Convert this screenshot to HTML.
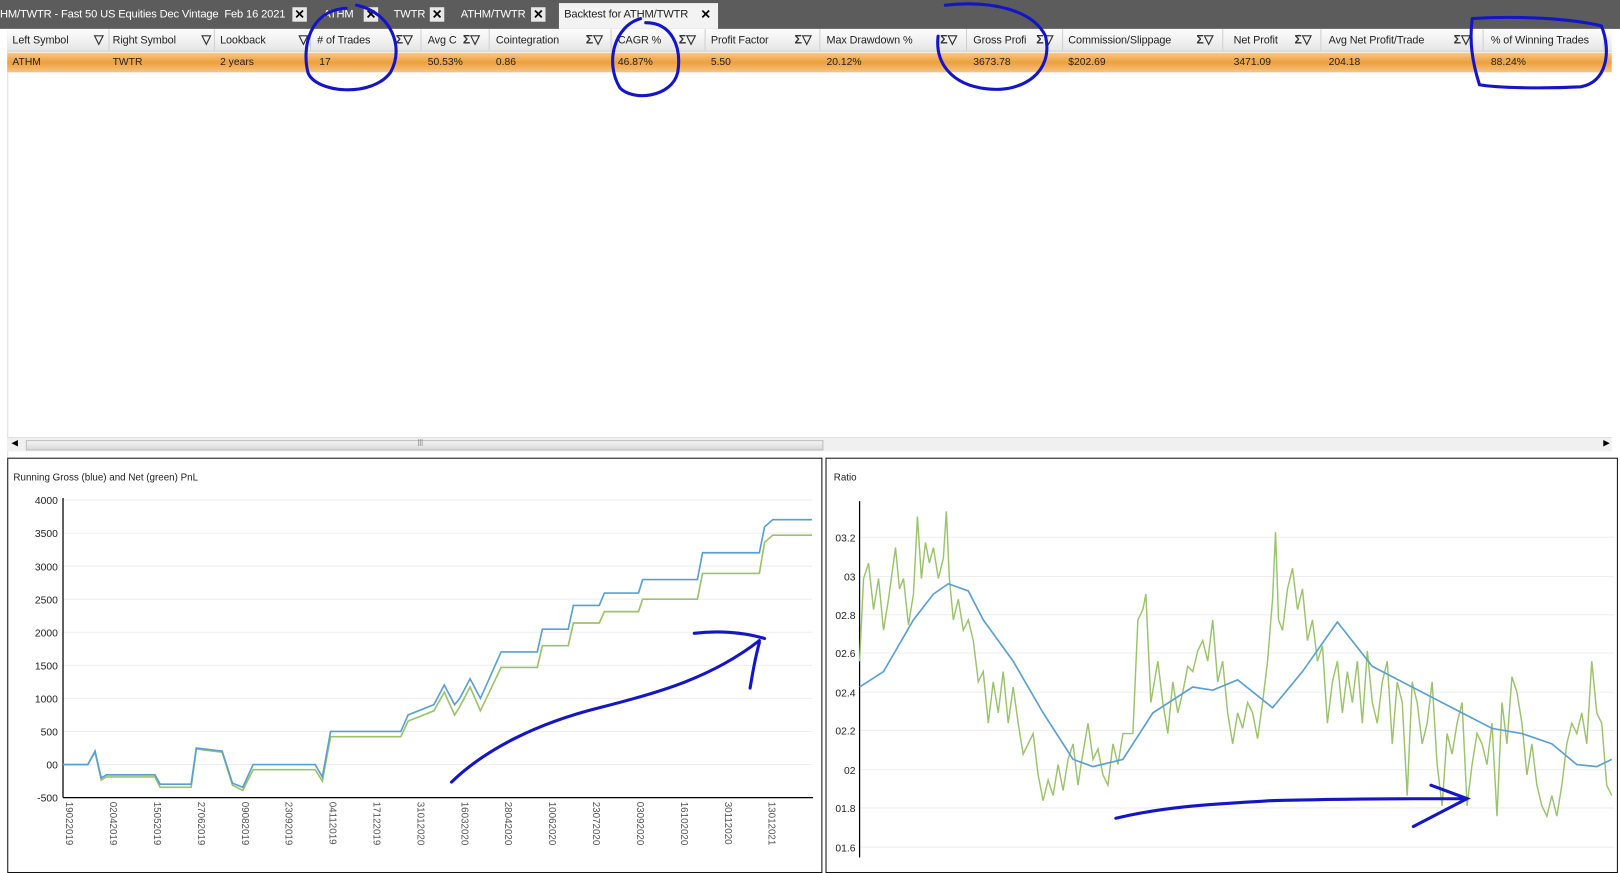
<!DOCTYPE html>
<html><head><meta charset="utf-8"><style>
html,body{margin:0;padding:0;width:1620px;height:859px;overflow:hidden;background:#fff;font-family:"Liberation Sans",Arial,sans-serif;}
#w{position:absolute;left:0;top:0;width:1568px;height:832px;transform:scale(1.03316);transform-origin:0 0;}
.tabbar{position:absolute;left:0;top:0;width:1568px;height:28px;background:#5c5c5c;}
.t{position:absolute;top:8px;font-size:10.8px;color:#fff;white-space:nowrap;letter-spacing:-0.15px;}
.x{position:absolute;top:7px;width:14px;height:14px;background:#e8e8e8;color:#000;font-size:12px;font-weight:bold;line-height:14px;text-align:center;}
.active{position:absolute;left:541px;top:3px;width:154px;height:25px;background:#f3f3f3;}
.hdr{position:absolute;left:7px;top:28px;width:1553px;height:21px;background:linear-gradient(#fdfdfd,#e6e6e6);border-bottom:1px solid #c8c8c8;}
.h{position:absolute;top:5px;font-size:10.5px;color:#222;white-space:nowrap;letter-spacing:-0.1px;}
.sep{position:absolute;top:0;width:1px;height:21px;background:#d0d0d0;}
.ic{position:absolute;top:3px;font-size:12px;color:#333;font-weight:bold;}
.row{position:absolute;left:7px;top:51px;width:1553px;height:19px;background:linear-gradient(#f6c98a,#ee9f3c 50%,#f5c585);}
.d{position:absolute;top:4px;font-size:10px;color:#222;}
.leftedge{position:absolute;left:0;top:28px;width:7px;height:804px;background:#fff;border-right:1px solid #ddd;}
.sb{position:absolute;left:7px;top:423px;width:1553px;height:13px;background:#f0f0f0;border-top:1px solid #e0e0e0;}
.thumb{position:absolute;left:18px;top:2px;width:770px;height:8px;background:linear-gradient(#f4f4f4,#d8d8d8);border:1px solid #bdbdbd;}
.panel{position:absolute;top:443px;height:400px;border:1px solid #111;background:#fff;}
</style></head><body><div id="w">
<div class="tabbar">
<span class="t" style="left:0">HM/TWTR - Fast 50 US Equities Dec Vintage&nbsp; Feb 16 2021</span><span class="x" style="left:283px">✕</span>
<span class="t" style="left:313px">ATHM</span><span class="x" style="left:352px">✕</span>
<span class="t" style="left:381px">TWTR</span><span class="x" style="left:416px">✕</span>
<span class="t" style="left:446px">ATHM/TWTR</span><span class="x" style="left:514px">✕</span>
<div class="active"></div><span class="t" style="left:546px;color:#222">Backtest for ATHM/TWTR</span><span class="x" style="left:676px;background:#f3f3f3">✕</span>
</div>
<div class="leftedge"></div>
<div class="hdr">
<span class="h" style="left:5px">Left Symbol</span><span class="ic" style="left:84px">▽</span><div class="sep" style="left:98px"></div>
<span class="h" style="left:102px">Right Symbol</span><span class="ic" style="left:188px">▽</span><div class="sep" style="left:200px"></div>
<span class="h" style="left:206px">Lookback</span><span class="ic" style="left:282px">▽</span><div class="sep" style="left:293px"></div>
<span class="h" style="left:300px"># of Trades</span><span class="ic" style="left:376px">Σ▽</span><div class="sep" style="left:400px"></div>
<span class="h" style="left:407px">Avg C</span><span class="ic" style="left:441px">Σ▽</span><div class="sep" style="left:466px"></div>
<span class="h" style="left:473px">Cointegration</span><span class="ic" style="left:560px">Σ▽</span><div class="sep" style="left:584px"></div>
<span class="h" style="left:591px">CAGR %</span><span class="ic" style="left:650px">Σ▽</span><div class="sep" style="left:675px"></div>
<span class="h" style="left:681px">Profit Factor</span><span class="ic" style="left:762px">Σ▽</span><div class="sep" style="left:786px"></div>
<span class="h" style="left:793px">Max Drawdown %</span><span class="ic" style="left:903px">Σ▽</span><div class="sep" style="left:928px"></div>
<span class="h" style="left:935px">Gross Profi</span><span class="ic" style="left:996px">Σ▽</span><div class="sep" style="left:1021px"></div>
<span class="h" style="left:1027px">Commission/Slippage</span><span class="ic" style="left:1151px">Σ▽</span><div class="sep" style="left:1176px"></div>
<span class="h" style="left:1187px">Net Profit</span><span class="ic" style="left:1246px">Σ▽</span><div class="sep" style="left:1271px"></div>
<span class="h" style="left:1279px">Avg Net Profit/Trade</span><span class="ic" style="left:1400px">Σ▽</span><div class="sep" style="left:1428px"></div>
<span class="h" style="left:1436px">% of Winning Trades</span><div class="sep" style="left:1545px"></div>
</div>
<div class="row">
<span class="d" style="left:5px">ATHM</span><span class="d" style="left:102px">TWTR</span><span class="d" style="left:206px">2 years</span><span class="d" style="left:302px">17</span><span class="d" style="left:407px">50.53%</span><span class="d" style="left:473px">0.86</span><span class="d" style="left:591px">46.87%</span><span class="d" style="left:681px">5.50</span><span class="d" style="left:793px">20.12%</span><span class="d" style="left:935px">3673.78</span><span class="d" style="left:1027px">$202.69</span><span class="d" style="left:1187px">3471.09</span><span class="d" style="left:1279px">204.18</span><span class="d" style="left:1436px">88.24%</span>
</div>
<div class="sb"><span style="position:absolute;left:4px;top:0;font-size:8px">◀</span><div class="thumb"><span style="position:absolute;left:378px;top:-2px;font-size:7px;color:#777">|||</span></div><span style="position:absolute;right:2px;top:0;font-size:8px">▶</span></div>
<div class="panel" style="left:7px;width:787px"></div>
<div class="panel" style="left:799px;width:765px"></div>
<svg width="1568" height="832" style="position:absolute;left:0;top:0" font-family="Liberation Sans, Arial, sans-serif">
<text x="13" y="465" font-size="9.5" fill="#222">Running Gross (blue) and Net (green) PnL</text>
<text x="807" y="465" font-size="9.5" fill="#222">Ratio</text>
<g stroke="#eee" stroke-width="1">
<line x1="61" y1="484" x2="786" y2="484"/><line x1="61" y1="516" x2="786" y2="516"/><line x1="61" y1="548" x2="786" y2="548"/><line x1="61" y1="580" x2="786" y2="580"/><line x1="61" y1="612" x2="786" y2="612"/><line x1="61" y1="644" x2="786" y2="644"/><line x1="61" y1="676" x2="786" y2="676"/><line x1="61" y1="708" x2="786" y2="708"/><line x1="61" y1="740" x2="786" y2="740"/>
<line x1="832" y1="520" x2="1562" y2="520"/><line x1="832" y1="558" x2="1562" y2="558"/><line x1="832" y1="595" x2="1562" y2="595"/><line x1="832" y1="632" x2="1562" y2="632"/><line x1="832" y1="670" x2="1562" y2="670"/><line x1="832" y1="707" x2="1562" y2="707"/><line x1="832" y1="745" x2="1562" y2="745"/><line x1="832" y1="782" x2="1562" y2="782"/><line x1="832" y1="820" x2="1562" y2="820"/>
</g>
<g stroke="#000" stroke-width="1.2"><line x1="61" y1="482" x2="61" y2="772"/><line x1="61" y1="772" x2="787" y2="772"/><line x1="832" y1="485" x2="832" y2="830"/></g>
<g font-size="10" fill="#222" text-anchor="end">
<text x="56" y="488">4000</text><text x="56" y="520">3500</text><text x="56" y="552">3000</text><text x="56" y="584">2500</text><text x="56" y="616">2000</text><text x="56" y="648">1500</text><text x="56" y="680">1000</text><text x="56" y="712">500</text><text x="56" y="744">00</text><text x="56" y="776">-500</text>
<text x="828" y="524">03.2</text><text x="828" y="562">03</text><text x="828" y="599">02.8</text><text x="828" y="636">02.6</text><text x="828" y="674">02.4</text><text x="828" y="711">02.2</text><text x="828" y="749">02</text><text x="828" y="786">01.8</text><text x="828" y="824">01.6</text>
</g>
<g font-size="9.5" fill="#555">
<text transform="translate(64,776) rotate(90)">19022019</text><text transform="translate(106.5,776) rotate(90)">02042019</text><text transform="translate(149,776) rotate(90)">15052019</text><text transform="translate(191.5,776) rotate(90)">27062019</text><text transform="translate(234,776) rotate(90)">09082019</text><text transform="translate(276.5,776) rotate(90)">23092019</text><text transform="translate(319,776) rotate(90)">04112019</text><text transform="translate(361.5,776) rotate(90)">17122019</text><text transform="translate(404,776) rotate(90)">31012020</text><text transform="translate(446.5,776) rotate(90)">16032020</text><text transform="translate(489,776) rotate(90)">28042020</text><text transform="translate(531.5,776) rotate(90)">10062020</text><text transform="translate(574,776) rotate(90)">23072020</text><text transform="translate(616.5,776) rotate(90)">03092020</text><text transform="translate(659,776) rotate(90)">16102020</text><text transform="translate(701.5,776) rotate(90)">30112020</text><text transform="translate(744,776) rotate(90)">13012021</text>
</g>
<polyline fill="none" stroke="#9bc36b" stroke-width="1.6" points="61,740 85,740 92,728 98,755 103,752 150,752 155,762 185,762 190,725 215,728 225,760 235,765 245,745 305,745 312,756 320,713 388,713 395,698 420,688 430,670 440,692 445,684 455,665 465,688 485,646 520,646 525,625 550,625 555,603 580,603 585,592 618,592 622,580 675,580 680,555 735,555 740,525 748,518 786,518"/>
<polyline fill="none" stroke="#5a9fd0" stroke-width="1.6" points="61,740 85,740 92,727 98,753 103,750 150,750 155,759 185,759 190,724 215,727 225,758 235,762 245,740 305,740 312,752 320,708 388,708 395,692 420,682 430,663 440,682 445,676 455,657 465,676 485,631 520,631 525,609 550,609 555,586 580,586 585,574 618,574 622,561 675,561 680,535 735,535 740,510 748,503 786,503"/>
<g transform="translate(53.8,0) scale(0.9655,1)">
<polyline fill="none" stroke="#9bc36b" stroke-width="1.4" vector-effect="non-scaling-stroke" points="806,640 810,560 815,545 820,590 825,560 830,610 835,580 842,530 846,570 850,560 855,605 860,575 864,500 868,560 872,525 876,545 880,530 885,560 890,540 893,495 896,560 900,600 905,580 910,610 915,600 920,620 925,660 930,650 935,700 940,660 945,690 950,650 955,700 960,665 965,700 970,730 975,720 980,710 985,750 990,775 995,755 1000,770 1005,740 1010,765 1015,735 1020,720 1025,760 1028,740 1035,700 1040,735 1045,725 1050,750 1055,760 1060,720 1065,740 1070,710 1080,710 1085,600 1090,590 1093,575 1098,680 1105,640 1110,680 1115,710 1120,660 1125,690 1130,670 1135,645 1140,650 1145,630 1150,620 1155,640 1160,600 1165,660 1170,640 1175,690 1180,720 1185,690 1190,705 1195,680 1200,690 1205,715 1210,680 1215,640 1220,580 1223,515 1226,600 1230,610 1235,570 1240,550 1245,590 1250,570 1255,620 1260,600 1265,640 1270,625 1275,700 1280,660 1285,640 1290,690 1295,650 1300,680 1305,640 1310,700 1315,630 1320,680 1325,700 1330,660 1335,640 1340,720 1345,660 1350,680 1355,770 1360,660 1365,680 1370,720 1375,700 1380,660 1385,740 1390,780 1395,710 1400,730 1405,700 1410,680 1415,780 1420,740 1425,710 1430,720 1435,740 1440,700 1445,790 1450,680 1455,720 1460,655 1465,670 1470,700 1475,750 1480,720 1485,760 1490,780 1495,790 1500,770 1505,790 1510,760 1515,720 1520,700 1525,710 1530,690 1535,720 1540,640 1545,690 1550,700 1555,760 1560,770"/>
<polyline fill="none" stroke="#5a9fd0" stroke-width="1.6" vector-effect="non-scaling-stroke" points="806,665 830,650 860,600 880,575 895,565 915,572 930,600 960,640 990,690 1020,735 1040,742 1070,735 1100,690 1140,665 1160,668 1185,658 1220,685 1250,650 1285,602 1320,645 1360,665 1400,685 1440,705 1470,710 1500,720 1525,740 1545,742 1560,735"/>
</g>
<g fill="none" stroke="#1515c8" stroke-width="3" stroke-linecap="round">
<path d="M335 8 C300 10 292 45 298 70 C305 90 360 95 378 70 C392 45 378 12 345 5"/>
<path d="M620 18 C595 25 585 60 600 85 C612 98 650 95 656 70 C660 45 650 22 625 22"/>
<path d="M915 5 C960 0 1000 10 1012 35 C1020 70 990 90 955 86 C920 82 905 60 908 35"/>
<path d="M1425 18 C1470 15 1520 18 1550 25 C1560 50 1555 80 1530 84 C1490 86 1450 85 1432 82 C1425 60 1422 40 1425 18"/>
<path d="M437 757 C470 725 520 700 580 685 C640 670 690 655 735 620"/>
<path d="M672 613 C695 610 720 612 740 618 M735 622 C730 640 728 655 726 666"/>
<path d="M1080 792 C1130 780 1180 778 1230 775 C1300 773 1370 773 1420 773 M1385 760 L1420 773 L1368 800"/>
</g>
</svg>
</div></body></html>
